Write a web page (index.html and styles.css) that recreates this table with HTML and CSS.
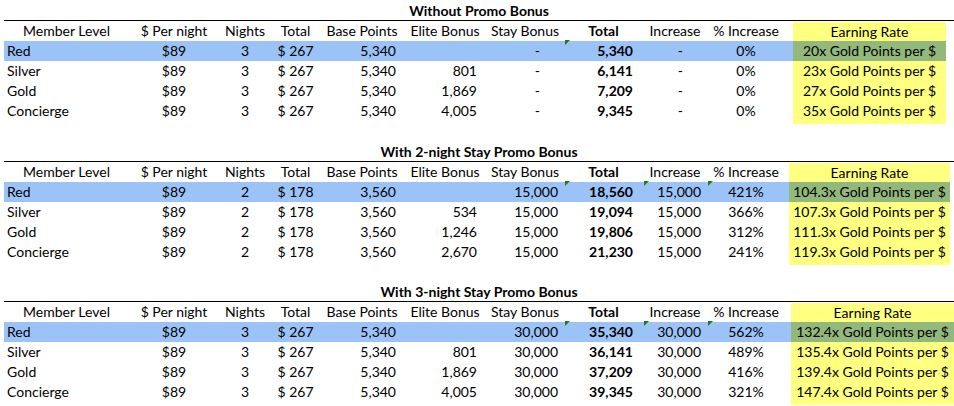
FILE: index.html
```html
<!DOCTYPE html>
<html>
<head>
<meta charset="utf-8">
<link rel="stylesheet" href="styles.css">
</head>
<body>
<section class="block t1">
  <div class="title">Without Promo Bonus</div>
  <div class="row head">
    <div>Member Level</div><div>$ Per night</div><div>Nights</div><div>Total</div><div>Base Points</div><div>Elite Bonus</div><div>Stay Bonus</div><div class="b">Total</div><div>Increase</div><div>% Increase</div><div class="rate">Earning Rate</div>
  </div>
  <div class="row data hl">
    <div>Red</div><div>$89</div><div>3</div><div>$ 267</div><div>5,340</div><div></div><div class="dash">-</div><div class="b flag">5,340</div><div class="dash">-</div><div>0%</div><div class="rate">20x Gold Points per $</div>
  </div>
  <div class="row data">
    <div>Silver</div><div>$89</div><div>3</div><div>$ 267</div><div>5,340</div><div>801</div><div class="dash">-</div><div class="b">6,141</div><div class="dash">-</div><div>0%</div><div class="rate">23x Gold Points per $</div>
  </div>
  <div class="row data">
    <div>Gold</div><div>$89</div><div>3</div><div>$ 267</div><div>5,340</div><div>1,869</div><div class="dash">-</div><div class="b">7,209</div><div class="dash">-</div><div>0%</div><div class="rate">27x Gold Points per $</div>
  </div>
  <div class="row data">
    <div>Concierge</div><div>$89</div><div>3</div><div>$ 267</div><div>5,340</div><div>4,005</div><div class="dash">-</div><div class="b">9,345</div><div class="dash">-</div><div>0%</div><div class="rate">35x Gold Points per $</div>
  </div>
  <div class="row tail"><div class="rate"></div></div>
</section>

<section class="block t2">
  <div class="title">With 2-night Stay Promo Bonus</div>
  <div class="row head">
    <div>Member Level</div><div>$ Per night</div><div>Nights</div><div>Total</div><div>Base Points</div><div>Elite Bonus</div><div>Stay Bonus</div><div class="b">Total</div><div>Increase</div><div>% Increase</div><div class="rate">Earning Rate</div>
  </div>
  <div class="row data hl">
    <div>Red</div><div>$89</div><div>2</div><div>$ 178</div><div>3,560</div><div></div><div>15,000</div><div class="b flag">18,560</div><div class="flag">15,000</div><div class="flag">421%</div><div class="rate">104.3x Gold Points per $</div>
  </div>
  <div class="row data">
    <div>Silver</div><div>$89</div><div>2</div><div>$ 178</div><div>3,560</div><div>534</div><div>15,000</div><div class="b">19,094</div><div>15,000</div><div>366%</div><div class="rate">107.3x Gold Points per $</div>
  </div>
  <div class="row data">
    <div>Gold</div><div>$89</div><div>2</div><div>$ 178</div><div>3,560</div><div>1,246</div><div>15,000</div><div class="b">19,806</div><div>15,000</div><div>312%</div><div class="rate">111.3x Gold Points per $</div>
  </div>
  <div class="row data">
    <div>Concierge</div><div>$89</div><div>2</div><div>$ 178</div><div>3,560</div><div>2,670</div><div>15,000</div><div class="b">21,230</div><div>15,000</div><div>241%</div><div class="rate">119.3x Gold Points per $</div>
  </div>
  <div class="row tail"><div class="rate"></div></div>
</section>

<section class="block t3">
  <div class="title">With 3-night Stay Promo Bonus</div>
  <div class="row head">
    <div>Member Level</div><div>$ Per night</div><div>Nights</div><div>Total</div><div>Base Points</div><div>Elite Bonus</div><div>Stay Bonus</div><div class="b">Total</div><div>Increase</div><div>% Increase</div><div class="rate">Earning Rate</div>
  </div>
  <div class="row data hl">
    <div>Red</div><div>$89</div><div>3</div><div>$ 267</div><div>5,340</div><div></div><div>30,000</div><div class="b flag">35,340</div><div class="flag">30,000</div><div class="flag">562%</div><div class="rate">132.4x Gold Points per $</div>
  </div>
  <div class="row data">
    <div>Silver</div><div>$89</div><div>3</div><div>$ 267</div><div>5,340</div><div>801</div><div>30,000</div><div class="b">36,141</div><div>30,000</div><div>489%</div><div class="rate">135.4x Gold Points per $</div>
  </div>
  <div class="row data">
    <div>Gold</div><div>$89</div><div>3</div><div>$ 267</div><div>5,340</div><div>1,869</div><div>30,000</div><div class="b">37,209</div><div>30,000</div><div>416%</div><div class="rate">139.4x Gold Points per $</div>
  </div>
  <div class="row data">
    <div>Concierge</div><div>$89</div><div>3</div><div>$ 267</div><div>5,340</div><div>4,005</div><div>30,000</div><div class="b">39,345</div><div>30,000</div><div>321%</div><div class="rate">147.4x Gold Points per $</div>
  </div>
  <div class="row tail"><div class="rate"></div></div>
</section>
</body>
</html>
```

FILE: styles.css
```css
body {
  margin: 0;
  background: #ffffff;
  color: #000000;
  font-family: Lato, "Open Sans", sans-serif;
  font-size: 14px;
}

.block {
  margin-left: 4px;
  width: 950px;
  height: 140px;
}

.block:first-child {
  margin-bottom: 1px;
}

.t1 { --cols: 125px 90px 52px 49px 84px 82px 78px 79px 64px 86px 153px; --pct-pad: 8px; }
.t2 { --cols: 125px 90px 52px 49px 84px 82px 78px 79px 64px 82px 161px; --pct-pad: 4px; }
.t3 { --cols: 125px 90px 52px 49px 84px 82px 78px 79px 64px 84px 163px; --pct-pad: 6px; }

.title {
  height: 19px;
  padding-top: 1px;
  line-height: 19px;
  text-align: center;
  font-weight: 700;
  border-bottom: 1px solid #000000;
}

.row {
  display: grid;
  grid-template-columns: var(--cols);
  width: max-content;
  height: 20px;
  line-height: 20px;
  white-space: nowrap;
}

.row > div {
  text-align: center;
}

.head > :nth-child(10) { padding-right: var(--pct-pad); }

.data > :nth-child(1) { text-align: left; padding-left: 3px; }
.data > :nth-child(5) { text-align: right; padding-right: 8px; }
.data > :nth-child(6) { text-align: right; padding-right: 9px; }
.data > :nth-child(7) { text-align: right; padding-right: 6px; }
.data > :nth-child(8) { text-align: right; padding-right: 10px; }
.data > :nth-child(9) { text-align: right; padding-right: 6px; }
.data > :nth-child(10) { padding-right: var(--pct-pad); }
.data > .dash { padding-right: 24px; }

.b { font-weight: 700; }

.rate { background: #ffff80; }
.head .rate { margin-top: 1px; }

.hl { background: #9cc3f8; }
.hl .rate { background: #93b87b; }

.tail { height: 3px; }
.tail .rate { grid-column: 11; }

.flag { position: relative; }
.flag::before {
  content: "";
  position: absolute;
  left: 1px;
  top: -1px;
  width: 0;
  height: 0;
  border-top: 5px solid #1f7a1f;
  border-right: 5px solid transparent;
}
```
